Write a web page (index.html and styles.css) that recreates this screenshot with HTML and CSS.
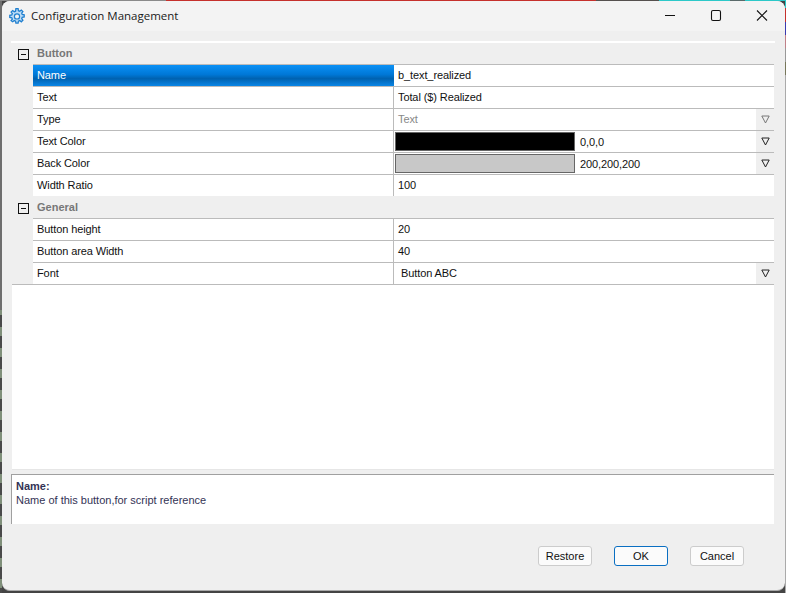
FILE: index.html
```html
<!DOCTYPE html>
<html lang="en">
<head>
<meta charset="utf-8">
<title>Configuration Management</title>
<link rel="stylesheet" href="styles.css">
</head>
<body>
<main class="window">
  <header class="titlebar">
    <svg class="app-icon" width="16" height="16" viewBox="0 0 16 16">
      <path class="gear" d="M6.9 .7h2.2l.3 2 1.3.5 1.6-1.2 1.6 1.6-1.2 1.6.5 1.3 2 .3v2.2l-2 .3-.5 1.3 1.2 1.6-1.6 1.6-1.6-1.2-1.3.5-.3 2H6.9l-.3-2-1.3-.5-1.6 1.2L2.1 12.7l1.2-1.6-.5-1.3-2-.3V7.3l2-.3.5-1.3L2.1 4.1l1.6-1.6 1.6 1.2 1.3-.5z"/>
      <circle class="gear-hole" cx="8" cy="8.4" r="2.6"/>
    </svg>
    <h1 class="title">Configuration Management</h1>
    <div class="controls">
      <svg class="control" width="46" height="30" viewBox="0 0 46 30"><path d="M18 14.5h10"/></svg>
      <svg class="control" width="46" height="30" viewBox="0 0 46 30"><rect x="18.5" y="9.5" width="9" height="10" rx="1.5"/></svg>
      <svg class="control" width="46" height="30" viewBox="0 0 46 30"><path d="M18 9.5l10 10M28 9.5l-10 10"/></svg>
    </div>
  </header>

  <div class="body">
    <section class="grid">
      <div class="group">
        <span class="toggle"></span><span class="group-name">Button</span>
      </div>
      <div class="row">
        <div class="label selected">Name</div>
        <div class="value">b_text_realized</div>
      </div>
      <div class="row">
        <div class="label">Text</div>
        <div class="value">Total ($) Realized</div>
      </div>
      <div class="row">
        <div class="label">Type</div>
        <div class="value muted">Text
          <span class="drop"><svg class="tri tri-muted" width="9" height="9" viewBox="0 0 9 9"><path d="M.8 1h7.4L4.5 8z"/></svg></span>
        </div>
      </div>
      <div class="row">
        <div class="label">Text Color</div>
        <div class="value color">
          <span class="swatch swatch-black"></span>0,0,0
          <span class="drop"><svg class="tri" width="9" height="9" viewBox="0 0 9 9"><path d="M.8 1h7.4L4.5 8z"/></svg></span>
        </div>
      </div>
      <div class="row">
        <div class="label">Back Color</div>
        <div class="value color">
          <span class="swatch swatch-grey"></span>200,200,200
          <span class="drop"><svg class="tri" width="9" height="9" viewBox="0 0 9 9"><path d="M.8 1h7.4L4.5 8z"/></svg></span>
        </div>
      </div>
      <div class="row row-last">
        <div class="label">Width Ratio</div>
        <div class="value">100</div>
      </div>
      <div class="group group-tall">
        <span class="toggle"></span><span class="group-name">General</span>
      </div>
      <div class="row">
        <div class="label">Button height</div>
        <div class="value">20</div>
      </div>
      <div class="row">
        <div class="label">Button area Width</div>
        <div class="value">40</div>
      </div>
      <div class="row row-last">
        <div class="label">Font</div>
        <div class="value font-value">Button ABC
          <span class="drop"><svg class="tri" width="9" height="9" viewBox="0 0 9 9"><path d="M.8 1h7.4L4.5 8z"/></svg></span>
        </div>
      </div>
      <div class="blank"></div>
    </section>

    <section class="help">
      <strong class="help-title">Name:</strong>
      <p class="help-text">Name of this button,for script reference</p>
    </section>

    <footer class="actions">
      <button class="btn" type="button">Restore</button>
      <button class="btn btn-default" type="button">OK</button>
      <button class="btn" type="button">Cancel</button>
    </footer>
  </div>
</main>
</body>
</html>
```
FILE: styles.css
```css
* { box-sizing: border-box; }

html, body { height: 100%; }

body {
  margin: 0;
  padding: 1px 1px 2px 2px;
  overflow: hidden;
  font-family: "Liberation Sans", Arial, sans-serif;
  font-size: 11px;
  color: #111;
  background-color: #444;
  background-image:
    linear-gradient(90deg, #8a8a8a 0 166px, #c5302c 166px 596px, #55504e 596px 659px, #2cc8c8 659px 730px, #5a6a6a 730px 745px, #2cc8c8 745px),
    linear-gradient(180deg, #2cc8c8 0 8px, #c5302c 8px 22px, #3a3ab0 22px 35px, #c08088 35px 48px, #999 48px 62px, #77775a 62px 75px, #aaa 75px),
    linear-gradient(180deg, #6e6e6e 0 310px, transparent 310px),
    repeating-linear-gradient(180deg, #4a4a4a 0 12px, #7f8f7a 12px 21px);
  background-size: 100% 1px, 1px 100%, 2px 100%, 2px 100%;
  background-position: 0 0, 100% 0, 0 0, 0 0;
  background-repeat: no-repeat;
}

.window {
  display: flex;
  flex-direction: column;
  height: 590px;
  background: #efefef;
  border-radius: 8px;
  border-bottom: 1px solid #aaa;
  overflow: hidden;
}

.titlebar {
  display: flex;
  align-items: center;
  flex: 0 0 30px;
  padding-left: 7px;
  background: #f3f3f3;
}

.app-icon { flex: none; }
.gear { fill: #bcdcf6; stroke: #1f7fcf; stroke-width: 1.3; }
.gear-hole { fill: #f3f3f3; stroke: #1f7fcf; stroke-width: 1.2; }

.title {
  margin: 0 0 2px 6px;
  font-family: "Open Sans", "Noto Sans", sans-serif;
  font-size: 11.5px;
  font-weight: 400;
  color: #1a1a1a;
}

.controls { display: flex; margin-left: auto; }
.control { fill: none; stroke: #111; stroke-width: 1.1; }

.body {
  flex: 1;
  display: flex;
  flex-direction: column;
  padding: 10px 11px 0 9px;
}

.grid {
  display: flex;
  flex-direction: column;
  height: 429px;
  margin-right: -1px;
  padding-right: 1px;
  border-top: 2px solid #fff;
  letter-spacing: -0.1px;
}

.group {
  display: flex;
  flex: 0 0 22px;
  padding-left: 7px;
  align-items: center;
  position: relative;
}
.group-tall { flex-basis: 23px; padding-top: 1px; }
.group::after {
  content: "";
  position: absolute;
  left: 22px;
  right: 0;
  bottom: 0;
  height: 1px;
  background: #bbb;
}

.toggle {
  position: relative;
  width: 11px;
  height: 11px;
  border: 1px solid #111;
}
.toggle::after {
  content: "";
  position: absolute;
  left: 2px;
  right: 2px;
  top: 4px;
  height: 1px;
  background: #111;
}

.group-name {
  margin: 0 0 2px 8px;
  font-weight: 700;
  color: #777;
  letter-spacing: 0;
}

.row {
  display: flex;
  flex: 0 0 22px;
  margin-left: 22px;
  background: #fff;
  border-bottom: 1px solid #bbb;
}
.row-last { flex-basis: 21px; border-bottom: 0; }

.label {
  flex: 0 0 361px;
  display: flex;
  align-items: center;
  padding: 0 0 2px 4px;
  border-right: 1px solid #bbb;
}

.selected {
  color: #fff;
  border-right: 0;
  background: linear-gradient(180deg, #0a90f5 0%, #0078d7 45%, #0062b0 65%, #0a86e6 100%);
}

.value {
  position: relative;
  flex: 1;
  display: flex;
  align-items: center;
  padding: 0 0 2px 4px;
}
.muted { color: #888; }
.font-value { padding-left: 7px; }
.color { padding: 0 0 0 1px; }

.swatch {
  width: 180px;
  height: 19px;
  margin: 0 5px 1px 0;
  border: 1px solid #666;
}
.swatch-black { background: #000; }
.swatch-grey { background: #c8c8c8; }

.drop {
  position: absolute;
  top: 0;
  right: 0;
  bottom: 0;
  width: 18px;
  display: flex;
  align-items: center;
  justify-content: center;
  background: #efefef;
}

.tri { fill: none; stroke: #222; stroke-width: 1; }
.tri-muted { stroke: #777; }

.blank {
  flex: 1;
  margin-left: 1px;
  background: #fff;
  border-top: 1px solid #bbb;
  border-bottom: 1px solid #e6e6e6;
}

.help {
  height: 50px;
  margin-top: 4px;
  padding: 5px 4px 0;
  background: #fff;
  border-top: 1px solid #a0a0a0;
  border-left: 1px solid #a0a0a0;
  color: #333355;
}
.help-title { display: block; line-height: 13px; }
.help-text { margin: 1px 0 0; line-height: 13px; }

.actions {
  display: flex;
  justify-content: flex-end;
  gap: 22px;
  margin-top: 22px;
  padding-right: 30px;
}

.btn {
  width: 54px;
  height: 20px;
  padding: 0;
  font: inherit;
  color: #111;
  background: #fbfbfb;
  border: 1px solid #ccc;
  border-radius: 3px;
}
.btn-default { border-color: #0a6fc2; }
```
